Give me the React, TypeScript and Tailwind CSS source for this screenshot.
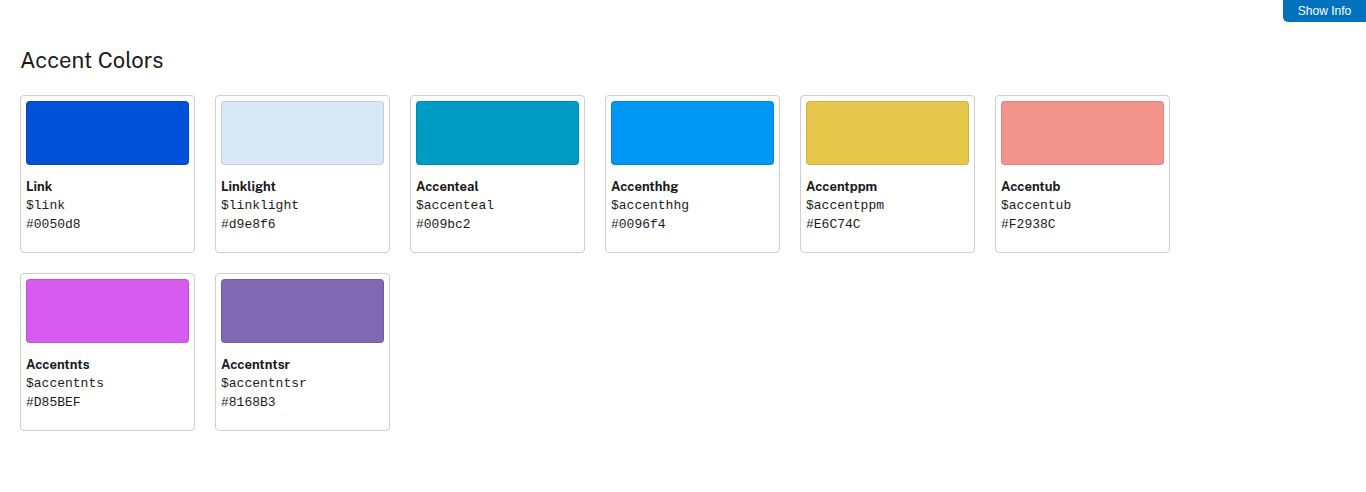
import React from "react";

const colors = [
  { name: "Link", varName: "$link", hex: "#0050d8" },
  { name: "Linklight", varName: "$linklight", hex: "#d9e8f6" },
  { name: "Accenteal", varName: "$accenteal", hex: "#009bc2" },
  { name: "Accenthhg", varName: "$accenthhg", hex: "#0096f4" },
  { name: "Accentppm", varName: "$accentppm", hex: "#E6C74C" },
  { name: "Accentub", varName: "$accentub", hex: "#F2938C" },
  { name: "Accentnts", varName: "$accentnts", hex: "#D85BEF" },
  { name: "Accentntsr", varName: "$accentntsr", hex: "#8168B3" },
];

const App = () => {
  return (
    <div className="min-h-screen bg-white font-['Public_Sans','Inter',sans-serif] text-[#1b1b1b]">
      <div className="flex justify-end">
        <button className="h-[22px] w-[83px] rounded-bl-[5px] bg-[#0071bc] font-['Liberation_Sans',Arial,sans-serif] text-[12px] text-white">
          Show Info
        </button>
      </div>

      <section className="px-5">
        <h1 className="mt-[24px] text-[22px] leading-[28px] font-normal">Accent Colors</h1>
        <div className="mt-[21px] flex w-[1170px] flex-wrap gap-x-5 gap-y-5">
          {colors.map((c) => (
            <div
              key={c.name}
              className="h-[158px] w-[175px] rounded-[4px] border border-[#cfcfcf] p-[5px]"
            >
              {/* swatch */}
              <div
                className="h-[64px] rounded-[4px] border border-black/10"
                style={{ backgroundColor: c.hex }}
              ></div>
              <div className="mt-[12px] text-[13px] leading-[19px]">
                <p className="font-bold">{c.name}</p>
                <p className="font-['Liberation_Mono',monospace]">{c.varName}</p>
                <p className="font-['Liberation_Mono',monospace]">{c.hex}</p>
              </div>
            </div>
          ))}
        </div>
      </section>
    </div>
  );
};

export default App;
